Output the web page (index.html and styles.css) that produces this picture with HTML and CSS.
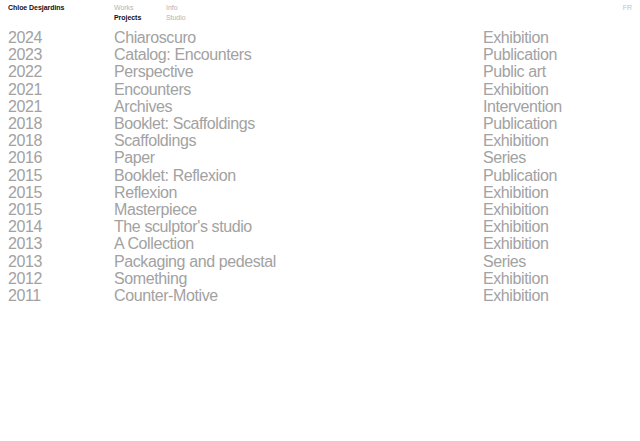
FILE: index.html
```html
<!DOCTYPE html>
<html lang="en">
<head>
  <meta charset="UTF-8">
  <meta name="viewport" content="width=device-width, initial-scale=1.0">
  <title>Chloe Desjardins</title>
  <link rel="stylesheet" href="styles.css">
</head>
<body>
  <header class="top">
    <a class="name" href="#">Chloe Desjardins</a>
    <nav class="menu">
      <a href="#">Works</a>
      <a href="#" class="current">Projects</a>
    </nav>
    <nav class="menu">
      <a href="#">Info</a>
      <a href="#">Studio</a>
    </nav>
    <a class="lang" href="#">FR</a>
  </header>

  <ul class="works" id="works"></ul>

  <script>
    const works = [
      ["2024", "Chiaroscuro", "Exhibition"],
      ["2023", "Catalog: Encounters", "Publication"],
      ["2022", "Perspective", "Public art"],
      ["2021", "Encounters", "Exhibition"],
      ["2021", "Archives", "Intervention"],
      ["2018", "Booklet: Scaffoldings", "Publication"],
      ["2018", "Scaffoldings", "Exhibition"],
      ["2016", "Paper", "Series"],
      ["2015", "Booklet: Reflexion", "Publication"],
      ["2015", "Reflexion", "Exhibition"],
      ["2015", "Masterpiece", "Exhibition"],
      ["2014", "The sculptor's studio", "Exhibition"],
      ["2013", "A Collection", "Exhibition"],
      ["2013", "Packaging and pedestal", "Series"],
      ["2012", "Something", "Exhibition"],
      ["2011", "Counter-Motive", "Exhibition"]
    ];
    const list = document.getElementById("works");
    works.forEach(([year, title, kind]) => {
      list.innerHTML += `
        <li class="work">
          <span>${year}</span>
          <span>${title}</span>
          <span>${kind}</span>
        </li>`;
    });
  </script>
</body>
</html>
```

FILE: styles.css
```css
body {
  font-family: 'Liberation Sans', Arial, sans-serif;
  background: #fff;
  margin: 0;
  padding: 0;
}
a {
  color: inherit;
  text-decoration: none;
}
.top {
  display: grid;
  grid-template-columns: 106px 52px 1fr auto;
  padding: 3px 8px 0 8px;
  font-size: 7px;
  line-height: 10px;
  color: #b4b4b4;
  letter-spacing: -0.05px;
}
.name {
  color: #111;
  font-weight: bold;
}
.menu {
  display: flex;
  flex-direction: column;
}
.menu .current {
  color: #111;
  font-weight: bold;
}
.lang {
  color: #c4c4c4;
}
.works {
  list-style: none;
  margin: 6px 0 0 0;
  padding: 0 8px;
}
.work {
  display: grid;
  grid-template-columns: 106px 369px 1fr;
  font-size: 16px;
  line-height: 17.2px;
  letter-spacing: -0.4px;
  color: #a2a2a2;
}
```
